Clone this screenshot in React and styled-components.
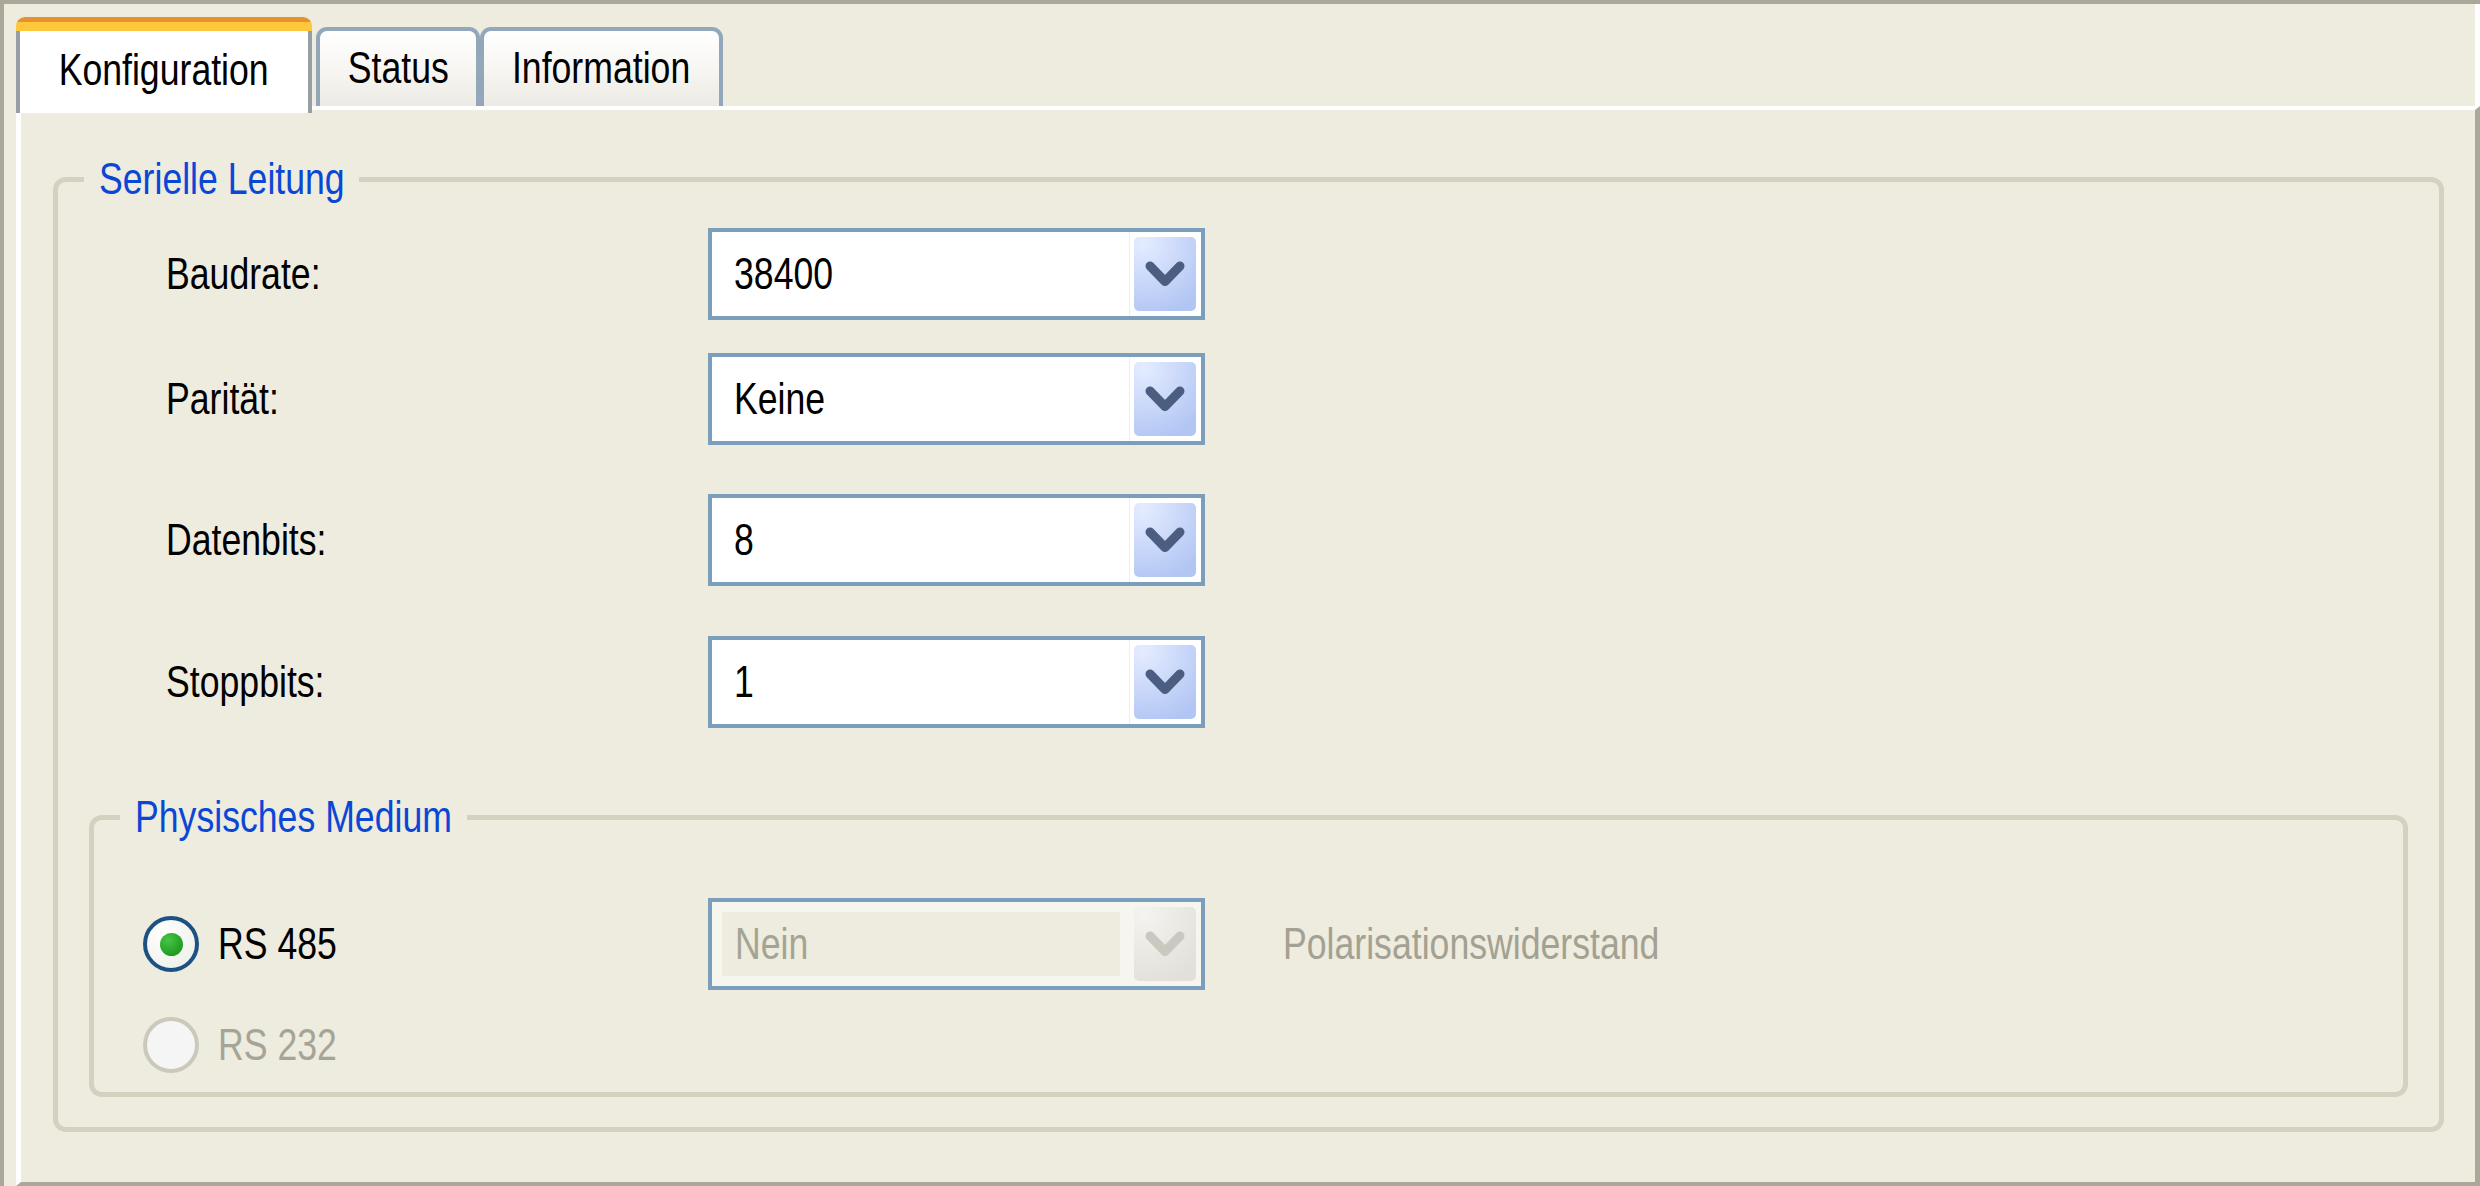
import React from "react";
import styled, { createGlobalStyle, css } from "styled-components";

const GlobalStyle = createGlobalStyle`
  html, body {
    margin: 0;
    padding: 0;
    background: #eeebdf;
  }
  body {
    font-family: "Liberation Sans Narrow", "Liberation Sans", Arial, sans-serif;
    font-size: 44px;
    line-height: 44px;
    color: #000;
  }
`;

// the screenshot uses a condensed face; squeeze the regular one to match
const Narrow = styled.span`
  display: inline-block;
  white-space: nowrap;
  transform: scaleX(0.81);
  transform-origin: ${(p) => p.$origin || "left"} center;
`;

const Frame = styled.div`
  width: 2480px;
  height: 1186px;
  box-sizing: border-box;
  border-top: 4px solid #aca899;
  border-left: 4px solid #aca899;
  display: flex;
  flex-direction: column;
  background: #eeebdf;
`;

const TabStrip = styled.div`
  height: 102px;
  flex: none;
  box-sizing: border-box;
  display: flex;
  align-items: flex-end;
  padding-left: 12px;
  border-right: 5px solid #fff;
`;

const ActiveTab = styled.div`
  position: relative;
  z-index: 1;
  width: 296px;
  height: 96px;
  margin-bottom: -7px;
  margin-right: 4px;
  box-sizing: border-box;
  padding-top: 31px;
  text-align: center;
  border-radius: 9px 9px 0 0;
  background:
    linear-gradient(#e8902d, #e8902d) top / 100% 5px no-repeat,
    linear-gradient(#ffc83c, #ffc83c) 0 5px / 100% 9px no-repeat,
    linear-gradient(90deg, #96a0a4 4px, #fff 4px, #fff calc(100% - 4px), #96a0a4 calc(100% - 4px));
`;

const Tab = styled.div`
  width: ${(p) => p.$w}px;
  height: 79px;
  box-sizing: border-box;
  padding-top: 15px;
  text-align: center;
  border: 4px solid #93a7ba;
  border-bottom: none;
  border-radius: 11px 11px 0 0;
  background: linear-gradient(#ffffff, #f6f5f1 55%, #ebeae4);
`;

const Panel = styled.div`
  flex: 1;
  margin-left: 12px;
  box-sizing: border-box;
  border-top: 4px solid #fff;
  border-left: 5px solid #fff;
  border-right: 5px solid #aca899;
  border-bottom: 4px solid #aca899;
  padding: 47px 31px 0 32px;
  display: flex;
  flex-direction: column;
`;

const Group = styled.fieldset`
  margin: ${(p) => p.$margin || 0};
  padding: ${(p) => p.$padding};
  min-width: 0;
  border: 5px solid #d3d1c0;
  border-radius: 13px;
`;

const Legend = styled.legend`
  color: #0b47d6;
  width: ${(p) => p.$w}px;
  margin-left: 26px;
  padding: 0 15px;
  white-space: nowrap;
`;

const FieldRow = styled.div`
  display: flex;
  align-items: center;
  margin-top: ${(p) => p.$top || 0}px;
  padding-left: ${(p) => p.$indent}px;
`;

const Label = styled.div`
  width: ${(p) => p.$w}px;
  flex: none;
  display: flex;
  align-items: center;
  color: ${(p) => (p.$muted ? "#a5a597" : "#000")};
`;

const Select = styled.div`
  width: 497px;
  height: 92px;
  flex: none;
  box-sizing: border-box;
  border: 4px solid #7b9ebd;
  background: ${(p) => (p.$disabled ? "#f6f6ee" : "#fff")};
  display: flex;
  align-items: stretch;
`;

const Value = styled.div`
  flex: 1;
  display: flex;
  align-items: center;
  ${(p) =>
    p.$disabled
      ? css`
          margin: 10px 14px 10px 10px;
          padding-left: 13px;
          background: #eeebdf;
          color: #a4a495;
        `
      : css`
          padding-left: 22px;
          border-right: 1px solid #e9eef8;
        `}
`;

const DropButton = styled.div`
  width: 62px;
  flex: none;
  margin: 5px 5px 5px ${(p) => (p.$disabled ? 0 : 4)}px;
  border-radius: 5px;
  display: flex;
  align-items: center;
  justify-content: center;
  background: ${(p) =>
    p.$disabled
      ? "radial-gradient(circle at 15% 10%, #f4f3ef, #e2e0d9 85%)"
      : "radial-gradient(circle at 15% 8%, #e4ecff, #b2c6f4 85%)"};
`;

const SideText = styled.div`
  margin-left: 78px;
  color: #a3a192;
`;

const Radio = styled.span`
  width: 56px;
  height: 56px;
  flex: none;
  box-sizing: border-box;
  border-radius: 50%;
  border: 4px solid ${(p) => (p.$checked ? "#1b5283" : "#cbc8bc")};
  background: ${(p) =>
    p.$checked ? "radial-gradient(circle at 35% 30%, #ffffff, #ecece6)" : "#f5f5f5"};
  display: flex;
  align-items: center;
  justify-content: center;
  margin-right: 19px;
`;

const RadioDot = styled.span`
  width: 23px;
  height: 23px;
  border-radius: 50%;
  background: radial-gradient(circle at 35% 30%, #45c545, #1f9a1f 75%);
`;

const Chevron = ({ disabled }) => (
  <svg width="40" height="27" viewBox="0 0 40 27">
    <path
      d="M5 5 L20 20.5 L35 5"
      fill="none"
      stroke={disabled ? "#cac9c0" : "#4b5e82"}
      strokeWidth="9"
      strokeLinecap="round"
      strokeLinejoin="round"
    />
  </svg>
);

const Combo = ({ value, disabled }) => (
  <Select $disabled={disabled}>
    <Value $disabled={disabled}>
      <Narrow>{value}</Narrow>
    </Value>
    <DropButton $disabled={disabled}>
      <Chevron disabled={disabled} />
    </DropButton>
  </Select>
);

const settings = [
  { label: "Baudrate:", value: "38400", top: 0 },
  { label: "Parität:", value: "Keine", top: 33 },
  { label: "Datenbits:", value: "8", top: 49 },
  { label: "Stoppbits:", value: "1", top: 50 },
];

export default function App() {
  return (
    <>
      <GlobalStyle />
      <Frame>
        <TabStrip>
          <ActiveTab>
            <Narrow $origin="center">Konfiguration</Narrow>
          </ActiveTab>
          <Tab $w={164}>
            <Narrow $origin="center">Status</Narrow>
          </Tab>
          <Tab $w={243}>
            <Narrow $origin="center">Information</Narrow>
          </Tab>
        </TabStrip>
        <Panel>
          <Group $padding="27px 0 30px 0">
            <Legend $w={245}>
              <Narrow>Serielle Leitung</Narrow>
            </Legend>
            {settings.map((s) => (
              <FieldRow key={s.label} $top={s.top} $indent={108}>
                <Label $w={542}>
                  <Narrow>{s.label}</Narrow>
                </Label>
                <Combo value={s.value} />
              </FieldRow>
            ))}
            <Group $margin="67px 31px 0 31px" $padding="59px 0 19px 0">
              <Legend $w={317}>
                <Narrow>Physisches Medium</Narrow>
              </Legend>
              <FieldRow $indent={49}>
                <Label $w={565}>
                  <Radio $checked>
                    <RadioDot />
                  </Radio>
                  <Narrow>RS 485</Narrow>
                </Label>
                <Combo value="Nein" disabled />
                <SideText>
                  <Narrow>Polarisationswiderstand</Narrow>
                </SideText>
              </FieldRow>
              <FieldRow $indent={49} $top={27}>
                <Label $w={565} $muted>
                  <Radio />
                  <Narrow>RS 232</Narrow>
                </Label>
              </FieldRow>
            </Group>
          </Group>
        </Panel>
      </Frame>
    </>
  );
}
